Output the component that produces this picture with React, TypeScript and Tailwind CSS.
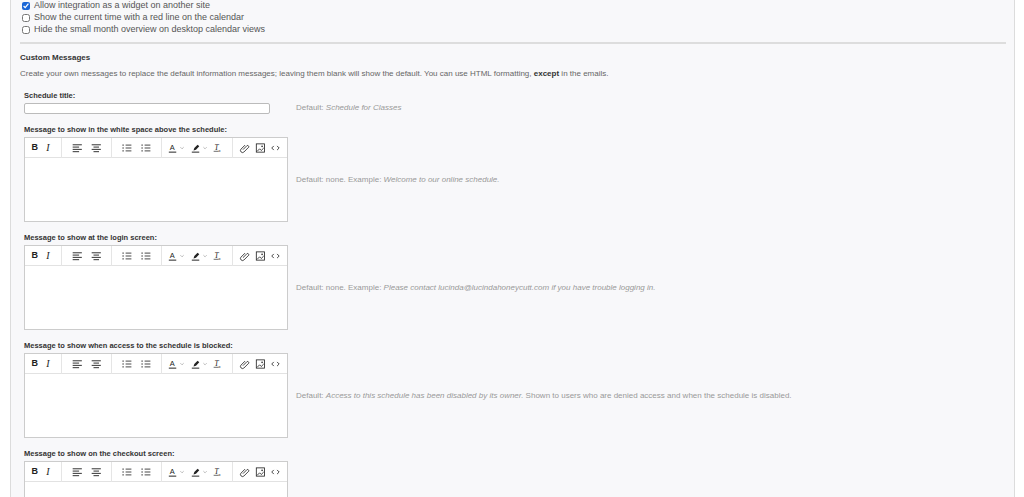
import React from "react";

const Sep = () => <div className="w-px h-[20px] bg-[#e5e5e5] mx-[6px]" />;

function Toolbar() {
  const s = "#222";
  return (
    <div className="flex items-center h-[20px] border-b border-[#e2e2e2] px-[4px] text-[#222]">
      <span className="w-[14px] text-center font-bold text-[9px]">B</span>
      <span className="w-[18px] text-center italic text-[10px] font-[family-name:Liberation_Serif,serif]">I</span>
      <Sep />
      {["left", "center"].map((k) => (
        <svg key={k} width="20" height="10" viewBox="0 0 18 10" className="mx-[1px]">
          <g stroke={s} strokeWidth="1">
            <line x1="4" y1="1.5" x2="14" y2="1.5" />
            <line x1={k === "left" ? 4 : 6} y1="4" x2={k === "left" ? 11 : 12} y2="4" />
            <line x1="4" y1="6.5" x2="14" y2="6.5" />
            <line x1={k === "left" ? 4 : 6} y1="9" x2={k === "left" ? 11 : 12} y2="9" />
          </g>
        </svg>
      ))}
      <Sep />
      {["ul", "ol"].map((k) => (
        <svg key={k} width="20" height="10" viewBox="0 0 20 10" className="mx-[1px]">
          <g stroke={s} strokeWidth="1">
            {[1.5, 5, 8.5].map((y) => (
              <g key={y}>
                <line x1="4" y1={y} x2="6" y2={y} />
                <line x1="8" y1={y} x2="15" y2={y} />
              </g>
            ))}
          </g>
        </svg>
      ))}
      <Sep />
      <svg width="24" height="12" viewBox="0 0 24 12">
        <text x="2" y="9" fontSize="9" fill={s} fontFamily="Liberation Sans">A</text>
        <line x1="1" y1="11" x2="10" y2="11" stroke={s} strokeWidth="1.2" />
        <path d="M15 5l2 2 2-2" stroke="#999" fill="none" strokeWidth="0.8" />
      </svg>
      <svg width="26" height="12" viewBox="0 0 26 12" className="ml-[3px]">
        <path d="M3 9l1-3 4-4 2 2-4 4z" fill={s} />
        <line x1="1" y1="11" x2="10" y2="11" stroke={s} strokeWidth="1.2" />
        <path d="M15 5l2 2 2-2" stroke="#999" fill="none" strokeWidth="0.8" />
      </svg>
      <svg width="16" height="12" viewBox="0 0 16 12">
        <text x="3" y="9" fontSize="9" fill={s} fontStyle="italic" fontFamily="Liberation Serif">T</text>
        <text x="8" y="11" fontSize="5" fill={s} fontFamily="Liberation Sans">x</text>
        <line x1="2" y1="10" x2="8" y2="10" stroke={s} strokeWidth="0.8" />
      </svg>
      <Sep />
      <svg width="18" height="12" viewBox="0 0 18 12">
        <path d="M6 8l5-5a1.6 1.6 0 0 1 2 2l-6 6a2.5 2.5 0 0 1-3.5-3.5l5-5" stroke={s} fill="none" strokeWidth="1" />
      </svg>
      <svg width="18" height="12" viewBox="0 0 18 12">
        <rect x="4" y="1" width="10" height="10" stroke={s} fill="none" strokeWidth="1" />
        <path d="M5 10l3-3 2 2 3-3" stroke={s} fill="none" strokeWidth="1" />
        <circle cx="11" cy="4" r="1" fill={s} />
      </svg>
      <svg width="18" height="12" viewBox="0 0 18 12">
        <path d="M7 3.5L4.5 6 7 8.5M11 3.5L13.5 6 11 8.5" stroke={s} fill="none" strokeWidth="1" />
      </svg>
    </div>
  );
}

function Row({ label, children }: { label: string; children: React.ReactNode }) {
  return (
    <div className="mt-[11px]">
      <div className="font-bold text-[7.5px] text-[#333] leading-[10px] mb-[2px]">{label}</div>
      <div className="flex items-center">
        <div className="w-[264px] shrink-0 border border-[#ccc] bg-white">
          <Toolbar />
          <div className="h-[63px]" />
        </div>
        <div className="ml-[8px] text-[8px] text-[#999]">{children}</div>
      </div>
    </div>
  );
}

const Cb = ({ checked, label }: { checked?: boolean; label: string }) => (
  <div className="flex items-center h-[12px] gap-[4px]">
    <input type="checkbox" defaultChecked={checked} className="w-[8px] h-[8px] m-0 accent-[#1a66d6]" />
    <span>{label}</span>
  </div>
);

export default function App() {
  return (
    <div className="h-[497px] overflow-hidden bg-white font-[family-name:Liberation_Sans,Arial,sans-serif] text-[#444]">
      <div className="mx-[10px] w-[1005px] h-full bg-[#f8f8fa] border-x border-[#dcdcdc] pl-[9px] pr-[8px]">
        <div className="text-[9px] text-[#555] pl-[2px]">
          <Cb checked label="Allow integration as a widget on another site" />
          <Cb label="Show the current time with a red line on the calendar" />
          <Cb label="Hide the small month overview on desktop calendar views" />
        </div>
        <div className="h-[2px] bg-[#ddd] mt-[6px]" />
        <div className="font-bold text-[8px] text-[#333] mt-[8px]">Custom Messages</div>
        <div className="text-[8px] text-[#666] mt-[4px]">
          Create your own messages to replace the default information messages; leaving them blank will show the default. You can use HTML formatting, <b className="text-[#333]">except</b> in the emails.
        </div>
        <div className="pl-[4px]">
          <div className="mt-[11px]">
            <div className="font-bold text-[7.5px] text-[#333] leading-[10px] mb-[1px]">Schedule title:</div>
            <div className="flex items-center">
              <div className="w-[246px] h-[11px] border border-[#bbb] rounded-[2px] bg-white shrink-0" />
              <div className="ml-[26px] text-[8px] text-[#999]">Default: <i>Schedule for Classes</i></div>
            </div>
          </div>
          <Row label="Message to show in the white space above the schedule:">
            Default: none. Example: <i>Welcome to our online schedule.</i>
          </Row>
          <Row label="Message to show at the login screen:">
            Default: none. Example: <i>Please contact lucinda@lucindahoneycutt.com if you have trouble logging in.</i>
          </Row>
          <Row label="Message to show when access to the schedule is blocked:">
            Default: <i>Access to this schedule has been disabled by its owner.</i> Shown to users who are denied access and when the schedule is disabled.
          </Row>
          <Row label="Message to show on the checkout screen:">
            Default: The administrator will process your payment. Example: <i>Please make checks payable to Lucinda Honeycutt.</i>
          </Row>
        </div>
      </div>
    </div>
  );
}
